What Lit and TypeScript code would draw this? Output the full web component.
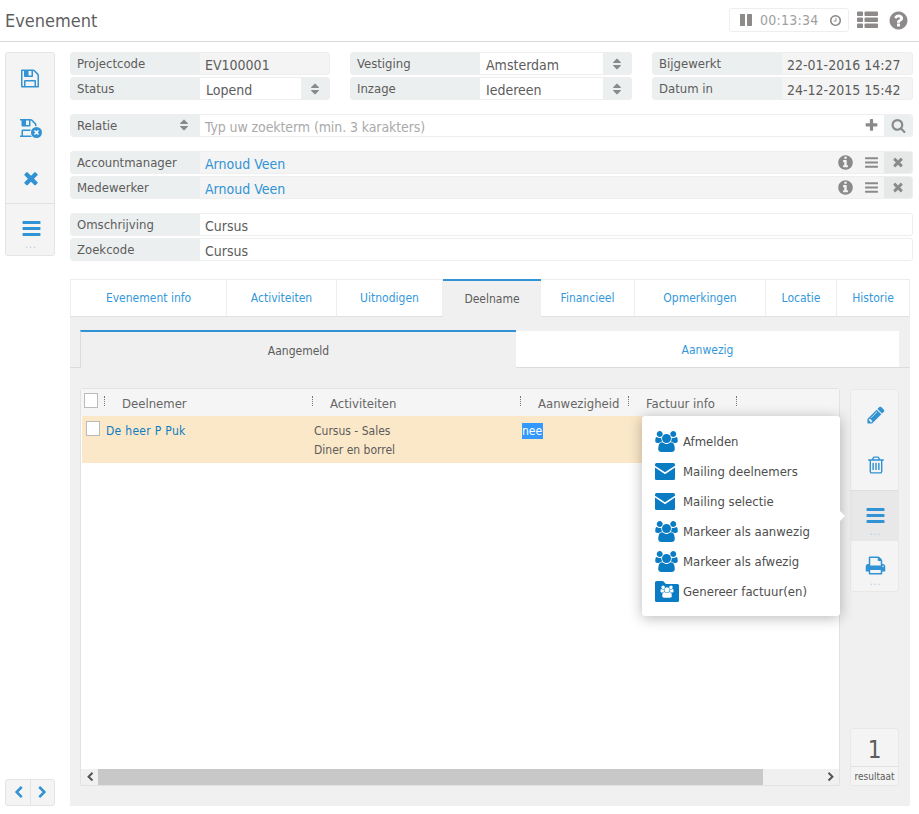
import { LitElement, html, css, svg } from "lit";
import { customElement } from "lit/decorators.js";

const P = {
  save: "M384 1536h768v-384h-768v384zm896 0h128v-896q0-14-10-38.5t-20-34.5l-281-281q-10-10-34-20t-39-10v416q0 40-28 68t-68 28h-576q-40 0-68-28t-28-68v-416h-128v1280h128v-416q0-40 28-68t68-28h832q40 0 68 28t28 68v416zm-384-928v-320q0-13-9.5-22.5t-22.5-9.5h-192q-13 0-22.5 9.5t-9.5 22.5v320q0 13 9.5 22.5t22.5 9.5h192q13 0 22.5-9.5t9.5-22.5zm640 32v928q0 40-28 68t-68 28h-1344q-40 0-68-28t-28-68v-1344q0-40 28-68t68-28h928q40 0 88 20t76 48l280 280q28 28 48 76t20 88z",
  times: "M1490 1322q0 40-28 68l-136 136q-28 28-68 28t-68-28l-294-294-294 294q-28 28-68 28t-68-28l-136-136q-28-28-28-68t28-68l294-294-294-294q-28-28-28-68t28-68l136-136q28-28 68-28t68 28l294 294 294-294q28-28 68-28t68 28l136 136q28 28 28 68t-28 68l-294 294 294 294q28 28 28 68z",
  bars: "M1664 1344v128q0 26-19 45t-45 19h-1408q-26 0-45-19t-19-45v-128q0-26 19-45t45-19h1408q26 0 45 19t19 45zm0-512v128q0 26-19 45t-45 19h-1408q-26 0-45-19t-19-45v-128q0-26 19-45t45-19h1408q26 0 45 19t19 45zm0-512v128q0 26-19 45t-45 19h-1408q-26 0-45-19t-19-45v-128q0-26 19-45t45-19h1408q26 0 45 19t19 45z",
  search: "M1216 832q0-185-131.5-316.5t-316.5-131.5-316.5 131.5-131.5 316.5 131.5 316.5 316.5 131.5 316.5-131.5 131.5-316.5zm512 832q0 52-38 90t-90 38q-54 0-90-38l-343-342q-179 124-399 124-143 0-273.5-55.5t-225-150-150-225-55.5-273.5 55.5-273.5 150-225 225-150 273.5-55.5 273.5 55.5 225 150 150 225 55.5 273.5q0 220-124 399l343 343q37 37 37 90z",
  plus: "M1600 736v192q0 40-28 68t-68 28h-416v416q0 40-28 68t-68 28h-192q-40 0-68-28t-28-68v-416h-416q-40 0-68-28t-28-68v-192q0-40 28-68t68-28h416v-416q0-40 28-68t68-28h192q40 0 68 28t28 68v416h416q40 0 68 28t28 68z",
  info: "M1152 1376v-160q0-14-9-23t-23-9h-96v-512q0-14-9-23t-23-9h-320q-14 0-23 9t-9 23v160q0 14 9 23t23 9h96v320h-96q-14 0-23 9t-9 23v160q0 14 9 23t23 9h448q14 0 23-9t9-23zm-128-896v-160q0-14-9-23t-23-9h-192q-14 0-23 9t-9 23v160q0 14 9 23t23 9h192q14 0 23-9t9-23zm640 416q0 209-103 385.5t-279.5 279.5-385.5 103-385.5-103-279.5-279.5-103-385.5 103-385.5 279.5-279.5 385.5-103 385.5 103 279.5 279.5 103 385.5z",
  help: "M1024 1376v-192q0-14-9-23t-23-9h-192q-14 0-23 9t-9 23v192q0 14 9 23t23 9h192q14 0 23-9t9-23zm256-672q0-88-55.5-163t-138.5-116-170-41q-243 0-371 213-15 24 8 42l132 100q7 6 19 6 16 0 25-12 53-68 86-92 34-24 86-24 48 0 85.5 26t37.5 59q0 38-20 61t-68 45q-63 28-115.5 86.5t-52.5 125.5v36q0 14 9 23t23 9h192q14 0 23-9t9-23q0-19 21.5-49.5t54.5-49.5q32-18 49-28.5t46-35 44.5-48 28-60.5 12.5-81zm384 192q0 209-103 385.5t-279.5 279.5-385.5 103-385.5-103-279.5-279.5-103-385.5 103-385.5 279.5-279.5 385.5-103 385.5 103 279.5 279.5 103 385.5z",
  pencil: "M491 1536l91-91-235-235-91 91v107h128v128h107zm523-928q0-22-22-22-10 0-17 7l-542 542q-7 7-7 17 0 22 22 22 10 0 17-7l542-542q7-7 7-17zm-54-192l416 416-832 832h-416v-416zm683 96q0 53-37 90l-166 166-416-416 166-165q36-38 90-38 53 0 91 38l235 234q37 39 37 91z",
  trash: "M704 736v576q0 14-9 23t-23 9h-64q-14 0-23-9t-9-23v-576q0-14 9-23t23-9h64q14 0 23 9t9 23zm256 0v576q0 14-9 23t-23 9h-64q-14 0-23-9t-9-23v-576q0-14 9-23t23-9h64q14 0 23 9t9 23zm256 0v576q0 14-9 23t-23 9h-64q-14 0-23-9t-9-23v-576q0-14 9-23t23-9h64q14 0 23 9t9 23zm128 724v-948h-896v948q0 22 7 40.5t14.5 27 10.5 8.5h832q3 0 10.5-8.5t14.5-27 7-40.5zm-672-1076h448l-48-117q-7-9-17-11h-317q-10 2-17 11zm928 32v64q0 14-9 23t-23 9h-96v948q0 83-47 143.5t-113 60.5h-832q-66 0-113-58.5t-47-141.5v-952h-96q-14 0-23-9t-9-23v-64q0-14 9-23t23-9h309l70-167q15-37 54-63t79-26h320q40 0 79 26t54 63l70 167h309q14 0 23 9t9 23z",
  print: "M448 1536h896v-256h-896v256zm0-640h896v-384h-160q-40 0-68-28t-28-68v-160h-640v640zm1152 64q0-26-19-45t-45-19-45 19-19 45 19 45 45 19 45-19 19-45zm128 0v416q0 13-9.5 22.5t-22.5 9.5h-224v160q0 40-28 68t-68 28h-960q-40 0-68-28t-28-68v-160h-224q-13 0-22.5-9.5t-9.5-22.5v-416q0-79 56.5-135.5t135.5-56.5h64v-544q0-40 28-68t68-28h672q40 0 88 20t76 48l152 152q28 28 48 76t20 88v256h64q79 0 135.5 56.5t56.5 135.5z",
  users: "M593 896q-162 5-265 128h-134q-82 0-138-40.5t-56-118.5q0-353 124-353 6 0 43.5 21t97.5 42.5 119 21.5q67 0 133-23-5 37-5 66 0 139 81 256zm1071 637q0 120-73 189.5t-194 69.5h-874q-121 0-194-69.5t-73-189.5q0-53 3.5-103.5t14-109 26.5-108.5 43-97.5 62-81 85.5-53.5 111.5-20q10 0 43 21.5t73 48 107 48 135 21.5 135-21.5 107-48 73-48 43-21.5q61 0 111.5 20t85.5 53.5 62 81 43 97.5 26.5 108.5 14 109 3.5 103.5zm-1024-1277q0 106-75 181t-181 75-181-75-75-181 75-181 181-75 181 75 75 181zm704 384q0 159-112.5 271.5t-271.5 112.5-271.5-112.5-112.5-271.5 112.5-271.5 271.5-112.5 271.5 112.5 112.5 271.5zm576 225q0 78-56 118.5t-138 40.5h-134q-103-123-265-128 81-117 81-256 0-29-5-66 66 23 133 23 59 0 119-21.5t97.5-42.5 43.5-21q124 0 124 353zm-128-609q0 106-75 181t-181 75-181-75-75-181 75-181 181-75 181 75 75 181z",
  clock: "M1024 544v448q0 14-9 23t-23 9h-320q-14 0-23-9t-9-23v-64q0-14 9-23t23-9h224v-352q0-14 9-23t23-9h64q14 0 23 9t9 23zm416 352q0-148-73-273t-198-198-273-73-273 73-198 198-73 273 73 273 198 198 273 73 273-73 198-198 73-273zm224 0q0 209-103 385.5t-279.5 279.5-385.5 103-385.5-103-279.5-279.5-103-385.5 103-385.5 279.5-279.5 385.5-103 385.5 103 279.5 279.5 103 385.5z",
  thlist: "M512 1248v192q0 40-28 68t-68 28h-320q-40 0-68-28t-28-68v-192q0-40 28-68t68-28h320q40 0 68 28t28 68zm0-512v192q0 40-28 68t-68 28h-320q-40 0-68-28t-28-68v-192q0-40 28-68t68-28h320q40 0 68 28t28 68zm1280 512v192q0 40-28 68t-68 28h-960q-40 0-68-28t-28-68v-192q0-40 28-68t68-28h960q40 0 68 28t28 68zm-1280-1024v192q0 40-28 68t-68 28h-320q-40 0-68-28t-28-68v-192q0-40 28-68t68-28h320q40 0 68 28t28 68zm1280 512v192q0 40-28 68t-68 28h-960q-40 0-68-28t-28-68v-192q0-40 28-68t68-28h960q40 0 68 28t28 68zm0-512v192q0 40-28 68t-68 28h-960q-40 0-68-28t-28-68v-192q0-40 28-68t68-28h960q40 0 68 28t28 68z",
  pause: "M1664 192v1408q0 26-19 45t-45 19h-512q-26 0-45-19t-19-45v-1408q0-26 19-45t45-19h512q26 0 45 19t19 45zm-896 0v1408q0 26-19 45t-45 19h-512q-26 0-45-19t-19-45v-1408q0-26 19-45t45-19h512q26 0 45 19t19 45z",
  sort: "M1408 1088q0 26-19 45l-448 448q-19 19-45 19t-45-19l-448-448q-19-19-19-45t19-45 45-19h896q26 0 45 19t19 45zm0-384q0 26-19 45t-45 19h-896q-26 0-45-19t-19-45 19-45l448-448q19-19 45-19t45 19l448 448q19 19 19 45z",
  left: "M1427 301l-531 531 531 531q19 19 19 45t-19 45l-166 166q-19 19-45 19t-45-19l-742-742q-19-19-19-45t19-45l742-742q19-19 45-19t45 19l166 166q19 19 19 45t-19 45z",
  right: "M1363 877l-742 742q-19 19-45 19t-45-19l-166-166q-19-19-19-45t19-45l531-531-531-531q-19-19-19-45t19-45l166-166q19-19 45-19t45 19l742 742q19 19 19 45t-19 45z",
};

const ic = (d: string, size: number, vb = 1792) =>
  html`<svg class="ic" width=${(size * vb) / 1792} height=${size} viewBox="0 0 ${vb} 1792"><path fill="currentColor" d=${d}></path></svg>`;

const saveX = html`<svg class="ic" width="22" height="19" viewBox="0 0 22 19">
  <g transform="translate(-1.5,-1.5) scale(.01172)"><path fill="currentColor" d=${P.save}></path></g>
  <circle cx="16.5" cy="13.5" r="6.5" fill="#f4f4f4"></circle>
  <circle cx="16.5" cy="13.5" r="5.5" fill="currentColor"></circle>
  <path d="M14.5 11.5l4 4M18.5 11.5l-4 4" stroke="#fff" stroke-width="1.6"></path>
</svg>`;

const mail = html`<svg class="ic" width="20" height="17" viewBox="0 0 20 17">
  <rect width="20" height="17" rx="1.5" fill="currentColor"></rect>
  <path d="M-1 3L10 10.2L21 3" fill="none" stroke="#fff" stroke-width="1.6"></path>
</svg>`;

const folder = html`<svg class="ic" width="24" height="21" viewBox="0 0 24 21">
  <path fill="currentColor" d="M1.5 0h6.5l3 3h11.5a1.5 1.5 0 0 1 1.5 1.5v15a1.5 1.5 0 0 1-1.5 1.5h-21a1.5 1.5 0 0 1-1.5-1.5v-18a1.5 1.5 0 0 1 1.5-1.5z"></path>
  ${svg`<g transform="translate(5.5,4.5) scale(.0068)"><path fill="#fff" d=${P.users}></path></g>`}
</svg>`;

const usersIc = html`<svg class="ic" width="23" height="21" viewBox="0 0 1920 1792"><path fill="currentColor" d=${P.users}></path></svg>`;

@customElement("app-root")
export class AppRoot extends LitElement {
  static styles = css`
    :host {
      display: flex;
      flex-direction: column;
      width: 919px;
      height: 814px;
      overflow: hidden;
      background: #fff;
      font-family: "DejaVu Sans Condensed", "DejaVu Sans", sans-serif;
      font-stretch: condensed;
      font-size: 14px;
      color: #5c5c5c;
    }
    * { box-sizing: border-box; }
    .ic { display: block; flex: none; }

    .top {
      flex: none;
      height: 42px;
      border-bottom: 1px solid #d8d8d8;
      display: flex;
      align-items: center;
      padding: 0 10px 0 5px;
    }
    .title { font-size: 18px; flex: 1; margin-top: -1px; color: #5f5f5f; }
    .timer {
      width: 120px;
      height: 24px;
      margin-top: -1px;
      border: 1px solid #eee;
      border-radius: 3px;
      display: flex;
      align-items: center;
      padding-left: 9px;
      color: #8f8a8a;
      font-size: 14px;
      gap: 7px;
    }
    .timer .t { color: #a0a0a0; letter-spacing: .25px; }
    .timer .c { margin-left: 3px; }
    .tl { color: #8f8a8a; margin-left: 8px; }
    .qs { color: #8f8a8a; margin-left: 10px; }

    .body {
      flex: 1;
      min-height: 0;
      display: flex;
      gap: 15px;
      padding: 10px 6px 8px 5px;
    }
    .left {
      flex: none;
      width: 50px;
      display: flex;
      flex-direction: column;
      justify-content: space-between;
    }
    .tools {
      height: 204px;
      background: #f4f4f4;
      border: 1px solid #e4e4e4;
      border-radius: 3px;
      color: #3193d3;
      display: flex;
      flex-direction: column;
    }
    .tools .b { height: 50px; padding-left: 2px; display: flex; align-items: center; justify-content: center; }
    .tools .b.m { height: 51px; border-top: 1px solid #e2e2e2; flex-direction: column; padding-top: 7px; }
    .dots { font-size: 10px; line-height: 6px; height: 6px; margin-top: 3px; letter-spacing: 1px; color: #a9c9e2; }
    .pager {
      height: 27px;
      background: #f4f4f4;
      border: 1px solid #e4e4e4;
      border-radius: 3px;
      color: #3193d3;
      display: grid;
      grid-template-columns: 1fr 1fr;
    }
    .pager div { display: flex; align-items: center; justify-content: center; }
    .pager div + div { border-left: 1px solid #e4e4e4; }

    .main { flex: 1; min-width: 0; display: flex; flex-direction: column; }
    .f3 { display: grid; grid-template-columns: 260px 282px 261px; gap: 2px 20px; }
    .fld {
      height: 23px;
      display: flex;
      border-radius: 3px;
      border: 1px solid #eeeeee;
      background: #fff;
      overflow: hidden;
    }
    .lab {
      flex: none;
      width: 130px;
      background: #ecefef;
      padding: 3px 0 0 7px;
      font-size: 13px;
      line-height: 17px;
      margin: -1px 0 -1px -1px;
      height: 23px;
    }
    .val { flex: 1; min-width: 0; padding: 0 0 0 5px; line-height: 24px; white-space: nowrap; }
    .ro { background: #f4f4f4; }
    .sel { display: flex; background: #ecefef; }
    .sel .val { background: #fff; padding-left: 6px; margin: 0; }
    .arr { flex: none; width: 28px; color: #8a8a8a; display: flex; align-items: center; justify-content: center; }
    .full { display: flex; flex-direction: column; gap: 2px; }
    .relatie { margin-top: 14px; }
    .people { margin-top: 14px; }
    .desc { margin-top: 14px; }
    .rel-lab { display: flex; justify-content: space-between; padding-right: 9px; }
    .rel-lab svg { color: #8a8a8a; margin-top: 1px; }
    .ph { color: #aaa; letter-spacing: -.1px; }
    .acts { display: flex; align-items: center; color: #8a8a8a; flex: none; }
    .sq { width: 28px; height: 23px; margin-top: -1px; background: #ecefef; display: flex; align-items: center; justify-content: center; }
    .sq.g { background: #e6e8e8; }
    .a1 { width: 26px; display: flex; justify-content: center; }
    .link { color: #2f93d6; }

    .tabs {
      margin-top: 18px;
      width: 840px;
      height: 38px;
      display: flex;
      flex: none;
      font-size: 12px;
    }
    .tab {
      border: 1px solid #eeeeee;
      border-width: 1px 1px 1px 0;
      border-bottom-color: #e0e0e0;
      color: #3498db;
      display: flex;
      align-items: center;
      justify-content: center;
      background: #fff;
    }
    .tab:first-child { border-left-width: 1px; }
    .tab.on {
      background: #f0f0f0;
      color: #5c5c5c;
      border: 0;
      border-top: 2px solid #3193d3;
    }
    .panel {
      width: 840px;
      flex: 1;
      min-height: 0;
      background: #f0f0f0;
      display: flex;
      flex-direction: column;
      padding: 13px 0 20px;
    }
    .sub {
      flex: none;
      height: 38px;
      display: grid;
      grid-template-columns: 10px 436px 383px 1fr;
      font-size: 12px;
    }
    .sub .sp { border-bottom: 1px solid #dcdcdc; }
    .sub .s1 {
      border-top: 2px solid #3193d3;
      border-left: 1px solid #dcdcdc;
      padding-top: 2px;
      display: flex; align-items: center; justify-content: center;
    }
    .sub .s2 {
      margin-top: 1px;
      padding-top: 2px;
      background: #fff;
      color: #3498db;
      border-bottom: 1px solid #dcdcdc;
      display: flex; align-items: center; justify-content: center;
    }
    .work {
      flex: 1;
      min-height: 0;
      margin-top: 20px;
      padding: 0 11px 0 10px;
      display: flex;
      gap: 10px;
    }
    .grid {
      position: relative;
      flex: none;
      width: 760px;
      background: #fff;
      border: 1px solid #e2e2e2;
      border-radius: 3px 3px 0 0;
      display: flex;
      flex-direction: column;
    }
    .gh {
      flex: none;
      height: 27px;
      background: #f5f5f5;
      display: grid;
      grid-template-columns: 23px 208px 208px 108px 108px;
      color: #666;
      font-size: 13px;
    }
    .gh .hc { display: flex; position: relative; padding: 4px 0 0 18px; line-height: 22px; white-space: nowrap; }
    .hc i {
      position: absolute;
      left: 0;
      top: 7px;
      height: 10px;
      border-left: 1px dotted #777;
    }
    .hc i.end { left: 108px; }
    .gh .cb0 { padding: 4px 0 0 3px; }
    .cb { width: 14px; height: 15px; background: #fff; border: 1px solid #bbb; display: block; }
    .gr {
      flex: none;
      height: 47px;
      background: #fbe8c8;
      margin-left: 1px;
      display: grid;
      grid-template-columns: 24px 208px 208px 1fr;
      font-size: 12px;
      line-height: 19px;
      padding-top: 6px;
    }
    .gr .cb { margin: -1px 0 0 4px; }
    .gr a { color: #0b7cc1; letter-spacing: .3px; }
    .sel-t { background: #3399ff; color: #fff; display: inline-block; line-height: 16px; height: 16px; padding-right: 1px; }
    .gb { flex: 1; }
    .sb {
      flex: none;
      height: 16px;
      background: #f0f0f0;
      display: flex;
      align-items: center;
      color: #555;
    }
    .sb .ar { width: 17px; display: flex; justify-content: center; flex: none; }
    .sb .th { width: 665px; height: 16px; background: #c8c8c8; flex: none; }
    .sb .tr { flex: 1; }

    .side { flex: 1; display: flex; flex-direction: column; justify-content: space-between; padding-top: 1px; }
    .st {
      height: 203px;
      background: #f4f4f4;
      border: 1px solid #e8e8e8;
      border-radius: 3px;
      color: #3193d3;
      display: flex;
      flex-direction: column;
    }
    .st .b { height: 50px; padding-left: 2px; display: flex; align-items: center; justify-content: center; flex-direction: column; flex: none; }
    .st .b.d { padding-top: 8px; }
    .st .b.a { background: #e8e8e8; border-top: 1px solid #dedede; height: 51px; }
    .cnt {
      height: 58px;
      background: #f4f4f4;
      border: 1px solid #e8e8e8;
      border-radius: 3px;
      text-align: center;
    }
    .cnt .n { height: 38px; line-height: 42px; font-size: 24px; border-bottom: 1px solid #e2e2e2; color: #5c5c5c; }
    .cnt .r { font-size: 10px; line-height: 19px; }

    .menu {
      position: absolute;
      left: 561px;
      top: 27px;
      width: 198px;
      height: 200px;
      background: #fff;
      border-radius: 3px;
      box-shadow: 0 2px 14px rgba(0, 0, 0, .28);
      padding: 10px 0 0 13px;
      color: #4e4e4e;
      font-size: 13px;
    }
    .menu::after {
      content: "";
      position: absolute;
      left: 198px;
      top: 95px;
      border: 5px solid transparent;
      border-left-color: #fff;
    }
    .mi { height: 30px; display: flex; align-items: center; white-space: nowrap; }
    .mi .g { width: 28px; color: #0a7cc4; flex: none; display: flex; }
  `;

  private field(label: string, value: string, kind: "ro" | "sel") {
    return html`<div class="fld ${kind}">
      <div class="lab">${label}</div>
      <div class="val ${kind}">${value}</div>
      ${kind === "sel" ? html`<div class="arr">${ic(P.sort, 14)}</div>` : ""}
    </div>`;
  }

  private person(label: string) {
    return html`<div class="fld ro">
      <div class="lab">${label}</div>
      <div class="val link">Arnoud Veen</div>
      <div class="acts">
        <div class="a1">${ic(P.info, 17)}</div>
        <div class="a1">${ic(P.bars, 15)}</div>
        <div class="sq g">${ic(P.times, 14)}</div>
      </div>
    </div>`;
  }

  private tab(t: string, w: number, on = false) {
    return html`<div class="tab ${on ? "on" : ""}" style="width:${w}px">${t}</div>`;
  }

  render() {
    return html`
      <div class="top">
        <div class="title">Evenement</div>
        <div class="timer">
          ${ic(P.pause, 14)}
          <span class="t">00:13:34</span>
          <span class="c">${ic(P.clock, 13)}</span>
        </div>
        <div class="tl">${ic(P.thlist, 21)}</div>
        <div class="qs">${ic(P.help, 21)}</div>
      </div>
      <div class="body">
        <div class="left">
          <div class="tools">
            <div class="b">${ic(P.save, 21)}</div>
            <div class="b">${saveX}</div>
            <div class="b">${ic(P.times, 20)}</div>
            <div class="b m">${ic(P.bars, 21)}<span class="dots">...</span></div>
          </div>
          <div class="pager">
            <div>${ic(P.left, 13)}</div>
            <div>${ic(P.right, 13)}</div>
          </div>
        </div>
        <div class="main">
          <div class="f3">
            ${this.field("Projectcode", "EV100001", "ro")}
            ${this.field("Vestiging", "Amsterdam", "sel")}
            ${this.field("Bijgewerkt", "22-01-2016 14:27", "ro")}
            ${this.field("Status", "Lopend", "sel")}
            ${this.field("Inzage", "Iedereen", "sel")}
            ${this.field("Datum in", "24-12-2015 15:42", "ro")}
          </div>
          <div class="fld relatie">
            <div class="lab rel-lab"><span>Relatie</span>${ic(P.sort, 14)}</div>
            <div class="val ph">Typ uw zoekterm (min. 3 karakters)</div>
            <div class="acts">
              <div class="a1">${ic(P.plus, 15)}</div>
              <div class="sq">${ic(P.search, 15)}</div>
            </div>
          </div>
          <div class="full people">
            ${this.person("Accountmanager")}
            ${this.person("Medewerker")}
          </div>
          <div class="full desc">
            <div class="fld"><div class="lab">Omschrijving</div><div class="val">Cursus</div></div>
            <div class="fld"><div class="lab">Zoekcode</div><div class="val">Cursus</div></div>
          </div>
          <div class="tabs">
            ${this.tab("Evenement info", 157)}
            ${this.tab("Activiteiten", 110)}
            ${this.tab("Uitnodigen", 106)}
            ${this.tab("Deelname", 98, true)}
            ${this.tab("Financieel", 94)}
            ${this.tab("Opmerkingen", 131)}
            ${this.tab("Locatie", 71)}
            ${this.tab("Historie", 73)}
          </div>
          <div class="panel">
            <div class="sub">
              <div class="sp"></div>
              <div class="s1">Aangemeld</div>
              <div class="s2">Aanwezig</div>
              <div class="sp"></div>
            </div>
            <div class="work">
              <div class="grid">
                <div class="gh">
                  <div class="hc cb0"><span class="cb"></span></div>
                  <div class="hc"><i></i>Deelnemer</div>
                  <div class="hc"><i></i>Activiteiten</div>
                  <div class="hc"><i></i>Aanwezigheid</div>
                  <div class="hc"><i></i>Factuur info<i class="end"></i></div>
                </div>
                <div class="gr">
                  <div><span class="cb"></span></div>
                  <div><a>De heer P Puk</a></div>
                  <div>Cursus - Sales<br />Diner en borrel</div>
                  <div><span class="sel-t">nee</span></div>
                </div>
                <div class="gb"></div>
                <div class="sb">
                  <div class="ar">${ic(P.left, 10)}</div>
                  <div class="th"></div>
                  <div class="tr"></div>
                  <div class="ar">${ic(P.right, 10)}</div>
                </div>
                <div class="menu">
                  <div class="mi"><span class="g">${usersIc}</span>Afmelden</div>
                  <div class="mi"><span class="g">${mail}</span>Mailing deelnemers</div>
                  <div class="mi"><span class="g">${mail}</span>Mailing selectie</div>
                  <div class="mi"><span class="g">${usersIc}</span>Markeer als aanwezig</div>
                  <div class="mi"><span class="g">${usersIc}</span>Markeer als afwezig</div>
                  <div class="mi"><span class="g">${folder}</span>Genereer factuur(en)</div>
                </div>
              </div>
              <div class="side">
                <div class="st">
                  <div class="b">${ic(P.pencil, 20)}</div>
                  <div class="b">${ic(P.trash, 20)}</div>
                  <div class="b a d">${ic(P.bars, 21)}<span class="dots">...</span></div>
                  <div class="b d">${ic(P.print, 21)}<span class="dots">...</span></div>
                </div>
                <div class="cnt">
                  <div class="n">1</div>
                  <div class="r">resultaat</div>
                </div>
              </div>
            </div>
          </div>
        </div>
      </div>
    `;
  }
}
